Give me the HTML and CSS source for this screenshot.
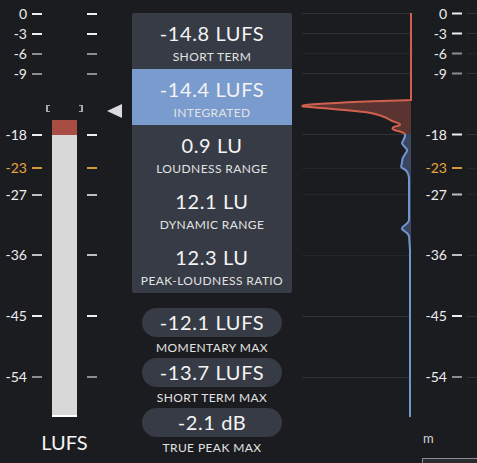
FILE: index.html
```html
<!DOCTYPE html>
<html>
<head>
<meta charset="utf-8">
<link rel="stylesheet" href="styles.css">
</head>
<body>
<div class="app">
  <div class="meter">
    <div class="scale">
      <div class="trow c-w" style="top:5.5px"><span class="lbl">0</span><i class="tk"></i><i class="tk tk2"></i></div>
      <div class="trow c-w" style="top:25.5px"><span class="lbl">-3</span><i class="tk"></i><i class="tk tk2"></i></div>
      <div class="trow c-g" style="top:45.5px"><span class="lbl">-6</span><i class="tk"></i><i class="tk tk2"></i></div>
      <div class="trow c-g" style="top:65.5px"><span class="lbl">-9</span><i class="tk"></i><i class="tk tk2"></i></div>
      <div class="trow c-w" style="top:126.5px"><span class="lbl">-18</span><i class="tk"></i><i class="tk tk2"></i></div>
      <div class="trow c-o" style="top:160px"><span class="lbl">-23</span><i class="tk"></i><i class="tk tk2"></i></div>
      <div class="trow c-l" style="top:186.5px"><span class="lbl">-27</span><i class="tk"></i><i class="tk tk2"></i></div>
      <div class="trow c-l" style="top:247px"><span class="lbl">-36</span><i class="tk"></i><i class="tk tk2"></i></div>
      <div class="trow c-w" style="top:308px"><span class="lbl">-45</span><i class="tk"></i><i class="tk tk2"></i></div>
      <div class="trow c-g" style="top:369px"><span class="lbl">-54</span><i class="tk"></i><i class="tk tk2"></i></div>
    </div>
    <div class="brackets"><i class="br br-l"></i><i class="br br-r"></i></div>
    <svg class="pointer" width="15" height="14" viewBox="0 0 15 14"><polygon points="15,0 15,14 0,7" fill="#dcdcdc"/></svg>
    <div class="bar-col">
      <div class="bar"><div class="bar-red"></div><div class="bar-fill"></div></div>
      <div class="unit">LUFS</div>
    </div>
  </div>

  <div class="stats">
    <div class="panel">
      <div class="row"><div class="val">-14.8 LUFS</div><div class="cap">SHORT TERM</div></div>
      <div class="row active"><div class="val">-14.4 LUFS</div><div class="cap">INTEGRATED</div></div>
      <div class="row"><div class="val">0.9 LU</div><div class="cap">LOUDNESS RANGE</div></div>
      <div class="row"><div class="val">12.1 LU</div><div class="cap">DYNAMIC RANGE</div></div>
      <div class="row"><div class="val">12.3 LU</div><div class="cap">PEAK-LOUDNESS RATIO</div></div>
    </div>
    <div class="maxes">
      <div class="max"><div class="pill">-12.1 LUFS</div><div class="pcap">MOMENTARY MAX</div></div>
      <div class="max"><div class="pill">-13.7 LUFS</div><div class="pcap">SHORT TERM MAX</div></div>
      <div class="max"><div class="pill">-2.1 dB</div><div class="pcap">TRUE PEAK MAX</div></div>
    </div>
  </div>

  <div class="graph">
    <svg class="plot" width="185" height="463" viewBox="292 0 185 463">
      <g stroke="#303237" stroke-width="1">
        <line x1="302" x2="411" y1="13.5" y2="13.5"/>
        <line x1="302" x2="411" y1="33.5" y2="33.5"/>
        <line x1="302" x2="411" y1="53.5" y2="53.5" stroke-dasharray="1 1"/>
        <line x1="302" x2="411" y1="73.5" y2="73.5"/>
        <line x1="302" x2="411" y1="134.5" y2="134.5"/>
        <line x1="302" x2="411" y1="168.5" y2="168.5" stroke-dasharray="1 1"/>
        <line x1="302" x2="411" y1="194.5" y2="194.5" stroke-dasharray="1 1"/>
        <line x1="302" x2="411" y1="255.5" y2="255.5" stroke-dasharray="1 1"/>
        <line x1="302" x2="411" y1="316.5" y2="316.5"/>
        <line x1="302" x2="411" y1="377.5" y2="377.5"/>
        <line x1="467" x2="477" y1="13.5" y2="13.5"/>
        <line x1="467" x2="477" y1="33.5" y2="33.5"/>
        <line x1="467" x2="477" y1="53.5" y2="53.5" stroke-dasharray="1 1"/>
        <line x1="467" x2="477" y1="73.5" y2="73.5"/>
        <line x1="467" x2="477" y1="134.5" y2="134.5"/>
        <line x1="467" x2="477" y1="168.5" y2="168.5" stroke-dasharray="1 1"/>
        <line x1="467" x2="477" y1="194.5" y2="194.5" stroke-dasharray="1 1"/>
        <line x1="467" x2="477" y1="255.5" y2="255.5" stroke-dasharray="1 1"/>
        <line x1="467" x2="477" y1="316.5" y2="316.5"/>
        <line x1="467" x2="477" y1="377.5" y2="377.5"/>
      </g>
      <g stroke-width="2">
        <line x1="452" x2="462" y1="13.5" y2="13.5" stroke="#eeeeee"/>
        <line x1="452" x2="462" y1="33.5" y2="33.5" stroke="#eeeeee"/>
        <line x1="452" x2="462" y1="53.5" y2="53.5" stroke="#8c8c8c"/>
        <line x1="452" x2="462" y1="73.5" y2="73.5" stroke="#8c8c8c"/>
        <line x1="452" x2="462" y1="134.5" y2="134.5" stroke="#eeeeee"/>
        <line x1="452" x2="462" y1="168" y2="168" stroke="#d39a3c"/>
        <line x1="452" x2="462" y1="194.5" y2="194.5" stroke="#bdbdbd"/>
        <line x1="452" x2="462" y1="255" y2="255" stroke="#bdbdbd"/>
        <line x1="452" x2="462" y1="316" y2="316" stroke="#eeeeee"/>
        <line x1="452" x2="462" y1="377" y2="377" stroke="#8c8c8c"/>
      </g>
      <path d="M411,100 C395,100.5 340,102 310,104.5 Q300,105.5 303,106.5 C320,108 345,109.5 365,112 C378,114 386,117 392,121 C398,123 402,124 399,125.5 C392,127 390,129 396,130.5 C401,131.5 404,133 405,134 L411,134 Z" fill="#5a3430"/>
      <path d="M405,134 C406,137 403,140 402,143 C402,146 408,148 407,151 C406,154 402,156 402,162 C402,166 399,167 404,169 C408,171 409,174 409,180 L409,220 C409,224 401,226 402,229 C403,231 408,232 409,236 L410,250 L410,417 L411,417 L411,134 Z" fill="#3a4660"/>
      <path d="M411,13 V100 C395,100.5 340,102 310,104.5 Q300,105.5 303,106.5 C320,108 345,109.5 365,112 C378,114 386,117 392,121 C398,123 402,124 399,125.5 C392,127 390,129 396,130.5 C401,131.5 404,133 405,134" fill="none" stroke="#d2604e" stroke-width="2"/>
      <path d="M405,134 C406,137 403,140 402,143 C402,146 408,148 407,151 C406,154 402,156 402,162 C402,166 399,167 404,169 C408,171 409,174 409,180 L409,220 C409,224 401,226 402,229 C403,231 408,232 409,236 L410,250 L410,417" fill="none" stroke="#7096d0" stroke-width="2"/>
    </svg>
    <span class="rl c-w" style="top:5.5px">0</span>
    <span class="rl c-w" style="top:25.5px">-3</span>
    <span class="rl c-w" style="top:45.5px">-6</span>
    <span class="rl c-w" style="top:65.5px">-9</span>
    <span class="rl c-w" style="top:126.5px">-18</span>
    <span class="rl c-o" style="top:160px">-23</span>
    <span class="rl c-w" style="top:186.5px">-27</span>
    <span class="rl c-w" style="top:247px">-36</span>
    <span class="rl c-w" style="top:308px">-45</span>
    <span class="rl c-w" style="top:369px">-54</span>
    <span class="mode">m</span>
    <div class="corner-box"></div>
  </div>
</div>
</body>
</html>
```

FILE: styles.css
```css
html, body {
  margin: 0;
  padding: 0;
  width: 477px;
  height: 463px;
  overflow: hidden;
  background: #1b1c20;
}
body {
  font-family: Lato, "Open Sans", sans-serif;
  color: #f0f0f0;
}
.app {
  display: flex;
  width: 477px;
  height: 463px;
}
.meter {
  position: relative;
  width: 132px;
  height: 463px;
  flex: none;
}
.scale .trow {
  position: absolute;
  left: 0;
  width: 132px;
  height: 16px;
  display: flex;
  align-items: center;
}
.lbl {
  width: 27px;
  text-align: right;
  font-size: 14px;
  line-height: 16px;
  color: #eeeeee;
}
.tk {
  display: block;
  width: 10px;
  height: 2px;
  margin-left: 5px;
  background: #eeeeee;
}
.tk2 {
  margin-left: 45px;
}
.c-g .tk { background: #8c8c8c; }
.c-l .tk { background: #bdbdbd; }
.c-o .lbl { color: #eaa63e; }
.c-o .tk { background: #d39a3c; }

.brackets {
  position: absolute;
  left: 46px;
  top: 105px;
  width: 37px;
  display: flex;
  justify-content: space-between;
}
.br {
  display: block;
  width: 2px;
  height: 5px;
  border: 1px solid #a8a8a8;
}
.br-l { border-left-width: 2px; border-right: none; }
.br-r { border-right-width: 2px; border-left: none; }
.pointer {
  position: absolute;
  left: 107px;
  top: 104px;
}
.bar-col {
  padding-left: 52px;
  padding-top: 120px;
  width: 25px;
  display: flex;
  flex-direction: column;
  align-items: center;
}
.bar {
  width: 25px;
  height: 297px;
  display: flex;
  flex-direction: column;
}
.bar-red {
  height: 15px;
  background: #a84d44;
}
.bar-fill {
  flex: 1;
  background: #d8d8d8;
  border-bottom: 2px solid #ffffff;
}
.unit {
  margin-top: 13px;
  font-size: 20px;
  line-height: 24px;
  color: #f4f4f4;
  white-space: nowrap;
}

.stats {
  width: 160px;
  flex: none;
  padding-top: 13px;
}
.panel {
  background: #363b45;
  border-radius: 2px;
  overflow: hidden;
}
.row {
  height: 56px;
  box-sizing: border-box;
  padding-top: 8px;
  text-align: center;
}
.row.active {
  background: #7a9bcd;
}
.val {
  font-size: 20px;
  line-height: 24px;
  color: #f4f4f4;
  letter-spacing: 0.6px;
}
.cap {
  margin-top: 5px;
  font-size: 12px;
  line-height: 14px;
  color: #e2e2e2;
  letter-spacing: 0.4px;
}
.maxes {
  padding: 15px 10px 0;
}
.max {
  height: 50px;
  text-align: center;
}
.pill {
  height: 29px;
  line-height: 29px;
  border-radius: 15px;
  background: #363b45;
  font-size: 20px;
  color: #f4f4f4;
  letter-spacing: 0.6px;
}
.pcap {
  font-size: 12px;
  line-height: 21px;
  color: #e2e2e2;
  letter-spacing: 0.4px;
}

.graph {
  position: relative;
  width: 185px;
  height: 463px;
  flex: none;
}
.plot {
  position: absolute;
  left: 0;
  top: 0;
}
.rl {
  position: absolute;
  right: 30px;
  width: 40px;
  text-align: right;
  font-size: 14px;
  line-height: 16px;
  color: #eeeeee;
}
.rl.c-o { color: #eaa63e; }
.mode {
  position: absolute;
  left: 131px;
  top: 430px;
  font-size: 13px;
  line-height: 16px;
  color: #d4d4d4;
}
.corner-box {
  position: absolute;
  left: 130px;
  top: 458px;
  width: 60px;
  height: 10px;
  box-sizing: border-box;
  border: 1px solid #8b8b8b;
  background: #2a2b2e;
}
```
